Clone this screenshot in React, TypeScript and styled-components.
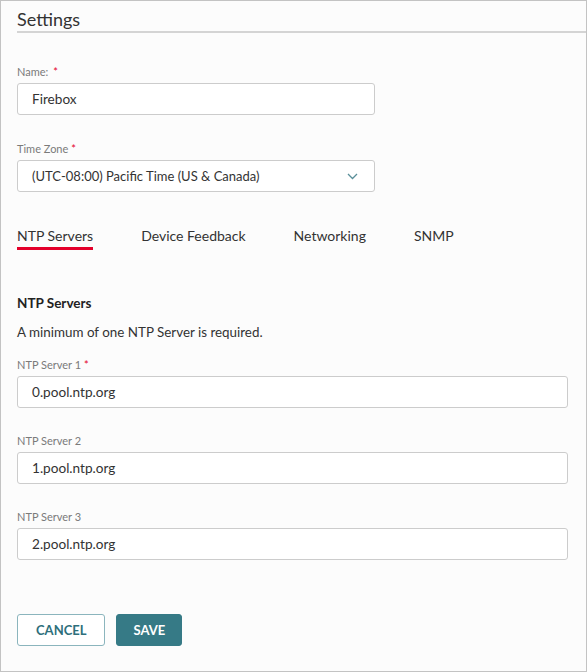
import React, { useState } from 'react'
import styled, { createGlobalStyle } from 'styled-components'

const FONT = `Lato, "Open Sans", "Liberation Sans", sans-serif`

const GlobalStyle = createGlobalStyle`
  html, body {
    margin: 0;
    padding: 0;
    background: #ffffff;
  }
  body {
    font-family: ${FONT};
    color: #333333;
  }
  * {
    box-sizing: border-box;
  }
`

const Frame = styled.div`
  width: 587px;
  height: 672px;
  border: 1px solid #c3c3c3;
  background: #fcfcfc;
  display: flex;
  flex-direction: column;
`

const Header = styled.h1`
  margin: 6px 0 0 16px;
  font-size: 18px;
  line-height: 24px;
  font-weight: 400;
  color: #333333;
  border-bottom: 2px solid #d4d4d4;
`

const Body = styled.div`
  padding: 0 18px 0 16px;
  display: flex;
  flex-direction: column;
`

const Field = styled.div<{ top: number; width?: number }>`
  display: flex;
  flex-direction: column;
  margin-top: ${({ top }) => top}px;
  width: ${({ width }) => (width ? `${width}px` : '100%')};
`

const Label = styled.label`
  font-size: 11px;
  line-height: 16px;
  color: #7a7a7a;
  margin-bottom: 3px;
`

const Required = styled.span<{ gap?: number }>`
  color: #e4002b;
  margin-left: ${({ gap = 3 }) => gap}px;
`

const Input = styled.div<{ size?: number }>`
  height: 32px;
  border: 1px solid #cccccc;
  border-radius: 3px;
  background: #ffffff;
  padding: 0 14px;
  display: flex;
  align-items: center;
  justify-content: space-between;
  font-size: ${({ size = 13.6 }) => size}px;
  color: #333333;
`

const Chevron = styled.svg`
  width: 11px;
  height: 7px;
  margin-right: 2px;
`

const Tabs = styled.div`
  display: flex;
  gap: 48px;
  margin-top: 34px;
`

const Tab = styled.div<{ active?: boolean }>`
  font-size: 14px;
  line-height: 20px;
  color: #333333;
  padding-bottom: 1px;
  border-bottom: 3px solid ${({ active }) => (active ? '#e4002b' : 'transparent')};
  cursor: pointer;
`

const SectionTitle = styled.h2`
  margin: 44px 0 0;
  font-size: 13.5px;
  line-height: 18px;
  font-weight: 700;
  color: #222222;
`

const Note = styled.p`
  margin: 11px 0 0;
  font-size: 13.4px;
  line-height: 18px;
  color: #333333;
`

const Actions = styled.div`
  display: flex;
  gap: 11px;
  margin-top: 54px;
`

const Button = styled.button<{ primary?: boolean }>`
  height: 32px;
  padding: 0 ${({ primary }) => (primary ? 16 : 18)}px;
  border-radius: 3px;
  font-family: ${FONT};
  font-size: 13px;
  font-weight: 700;
  text-transform: uppercase;
  cursor: pointer;
  border: 1px solid ${({ primary }) => (primary ? '#367a86' : '#8bb5bd')};
  background: ${({ primary }) => (primary ? '#367a86' : '#ffffff')};
  color: ${({ primary }) => (primary ? '#ffffff' : '#2e6f7b')};
`

const TABS = ['NTP Servers', 'Device Feedback', 'Networking', 'SNMP']

const SERVERS = [
  { label: 'NTP Server 1', value: '0.pool.ntp.org', required: true, top: 16 },
  { label: 'NTP Server 2', value: '1.pool.ntp.org', required: false, top: 25 },
  { label: 'NTP Server 3', value: '2.pool.ntp.org', required: false, top: 25 },
]

export default function App() {
  const [active, setActive] = useState(0)

  return (
    <>
      <GlobalStyle />
      <Frame>
        <Header>Settings</Header>

        <Body>
          <Field top={31} width={358}>
            <Label>
              Name:<Required gap={5}>*</Required>
            </Label>
            <Input>Firebox</Input>
          </Field>

          <Field top={26} width={358}>
            <Label>
              Time Zone<Required>*</Required>
            </Label>
            <Input size={13}>
              (UTC-08:00) Pacific Time (US &amp; Canada)
              <Chevron viewBox="0 0 11 7">
                <path d="M1 1l4.5 4.5L10 1" fill="none" stroke="#5a8f99" strokeWidth="1.3" />
              </Chevron>
            </Input>
          </Field>

          <Tabs>
            {TABS.map((tab, index) => (
              <Tab key={tab} active={index === active} onClick={() => setActive(index)}>
                {tab}
              </Tab>
            ))}
          </Tabs>

          <SectionTitle>NTP Servers</SectionTitle>
          <Note>A minimum of one NTP Server is required.</Note>

          {SERVERS.map((server) => (
            <Field key={server.label} top={server.top}>
              <Label>
                {server.label}
                {server.required && <Required>*</Required>}
              </Label>
              <Input>{server.value}</Input>
            </Field>
          ))}

          <Actions>
            <Button>Cancel</Button>
            <Button primary>Save</Button>
          </Actions>
        </Body>
      </Frame>
    </>
  )
}
